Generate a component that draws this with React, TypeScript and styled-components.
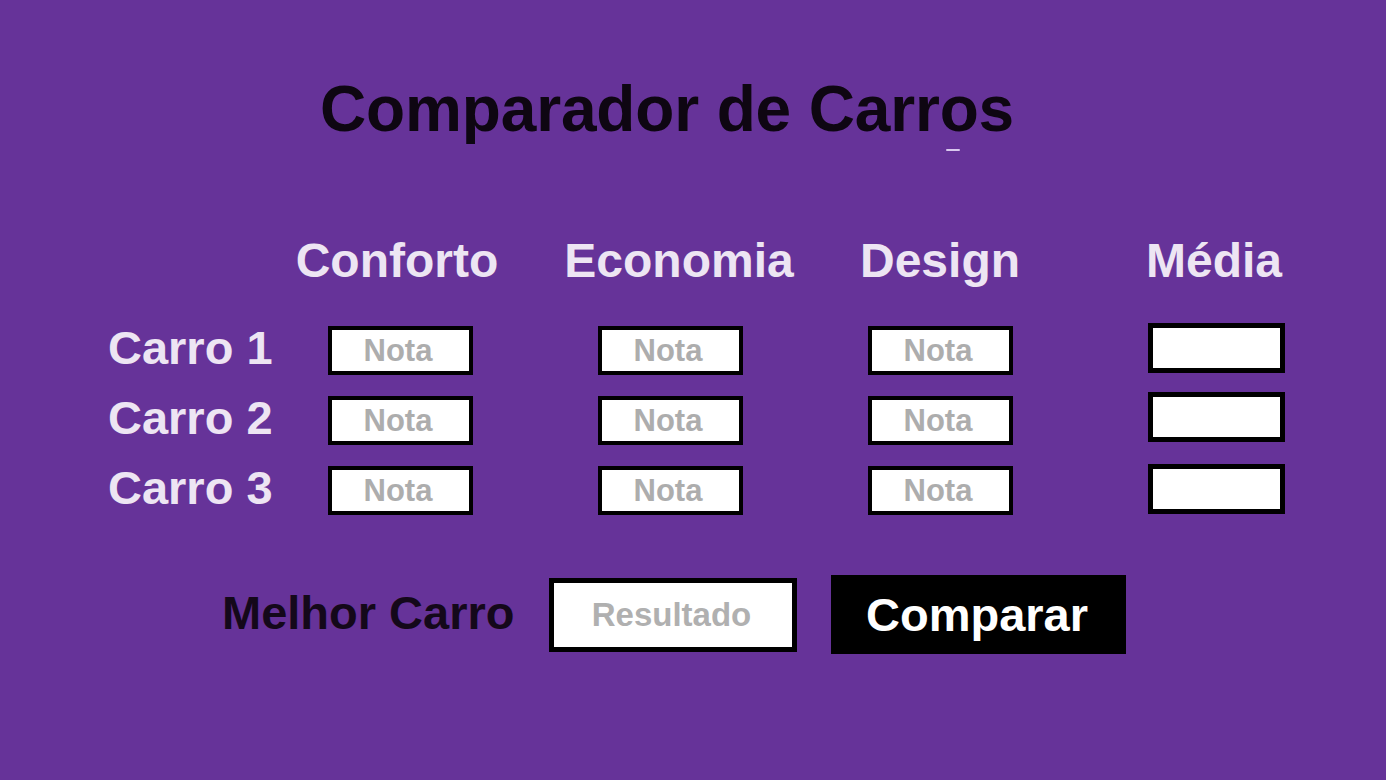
import React from "react";
import styled, { createGlobalStyle } from "styled-components";

const GlobalStyle = createGlobalStyle`
  html, body { margin: 0; padding: 0; background: #663399; }
  body { font-family: "Liberation Sans", Arial, sans-serif; }
  * { box-sizing: border-box; }
`;

const Page = styled.main`
  position: relative;
  width: 1386px;
  height: 780px;
  background: #663399;
  display: flex;
  flex-direction: column;
  overflow: hidden;
`;

const Title = styled.h1`
  margin: 0;
  padding: 73px 0 0 320px;
  height: 160px;
  font-size: 64px;
  line-height: 72px;
  font-weight: 700;
  color: #0e0612;
  letter-spacing: -0.15px;
  white-space: nowrap;
`;

const Spark = styled.span`
  position: absolute;
  left: 946px;
  top: 149px;
  width: 14px;
  height: 2px;
  border-radius: 1px;
  background: #d9c9ee;
`;

const columns = "157px 270px 270px 270px 282px";

const HeaderGrid = styled.div`
  display: grid;
  grid-template-columns: ${columns};
  height: 60px;
  padding-left: 108px;
  margin-top: 71px;
`;

const BodyGrid = styled.section`
  display: grid;
  grid-template-columns: ${columns};
  grid-auto-rows: 70px;
  padding-left: 108px;
  margin-top: 24px;
`;

const Header = styled.div<{ $dx: number }>`
  display: flex;
  align-items: center;
  justify-content: center;
  font-size: 48px;
  line-height: 48px;
  font-weight: 700;
  color: #ede5f3;
  white-space: nowrap;
  transform: translateX(${(p) => p.$dx}px);
`;

const HeaderSpacer = styled.div``;

const RowWrap = styled.div`
  display: contents;
`;

const RowLabel = styled.div`
  display: flex;
  align-items: center;
  font-size: 47px;
  line-height: 47px;
  font-weight: 700;
  color: #ede5f3;
  white-space: nowrap;
  transform: translateY(-3px);
`;

const Cell = styled.div`
  display: flex;
  align-items: center;
  justify-content: center;
`;

const NotaBox = styled.div`
  width: 145px;
  height: 49px;
  border: 4px solid #000;
  background: #fff;
  display: flex;
  align-items: center;
  justify-content: center;
  font-size: 31px;
  line-height: 31px;
  font-weight: 700;
  color: #adadad;
  padding-right: 4px;
`;

const MediaBox = styled.div<{ $dy: number }>`
  width: 137px;
  height: 50px;
  border: 5px solid #000;
  background: #fff;
  transform: translateY(${(p) => p.$dy}px);
`;

const Footer = styled.div`
  display: flex;
  align-items: center;
  gap: 34px;
  padding-left: 222px;
  margin-top: 50px;
`;

const BestLabel = styled.div`
  font-size: 47px;
  line-height: 47px;
  font-weight: 700;
  color: #14081a;
  white-space: nowrap;
  transform: translateY(-2px);
`;

const ResultBox = styled.div`
  width: 248px;
  height: 74px;
  border: 5px solid #000;
  background: #fff;
  display: flex;
  align-items: center;
  justify-content: center;
  font-size: 33px;
  line-height: 33px;
  font-weight: 700;
  color: #b0b0b0;
  padding-right: 2px;
`;

const CompareButton = styled.button`
  width: 295px;
  height: 79px;
  border: none;
  background: #000;
  color: #fff;
  font-family: "Liberation Sans", Arial, sans-serif;
  font-size: 47px;
  font-weight: 700;
  line-height: 47px;
  padding: 0 2px 0 0;
  cursor: pointer;
`;

const headers = [
  { t: "Conforto", dx: -3 },
  { t: "Economia", dx: 9 },
  { t: "Design", dx: 0 },
  { t: "Média", dx: -2 },
];

const rows = [
  { label: "Carro 1", mediaDy: -2 },
  { label: "Carro 2", mediaDy: -3 },
  { label: "Carro 3", mediaDy: -1 },
];

export default function App() {
  return (
    <>
      <GlobalStyle />
      <Page>
        <Title>Comparador de Carros</Title>
        <Spark />
        <HeaderGrid>
          <HeaderSpacer />
          {headers.map((h) => (
            <Header key={h.t} $dx={h.dx}>
              {h.t}
            </Header>
          ))}
        </HeaderGrid>
        <BodyGrid>
          {rows.map((r) => (
            <RowWrap key={r.label}>
              <RowLabel>{r.label}</RowLabel>
              <Cell><NotaBox>Nota</NotaBox></Cell>
              <Cell><NotaBox>Nota</NotaBox></Cell>
              <Cell><NotaBox>Nota</NotaBox></Cell>
              <Cell><MediaBox $dy={r.mediaDy} /></Cell>
            </RowWrap>
          ))}
        </BodyGrid>
        <Footer>
          <BestLabel>Melhor Carro</BestLabel>
          <ResultBox>Resultado</ResultBox>
          <CompareButton>Comparar</CompareButton>
        </Footer>
      </Page>
    </>
  );
}
